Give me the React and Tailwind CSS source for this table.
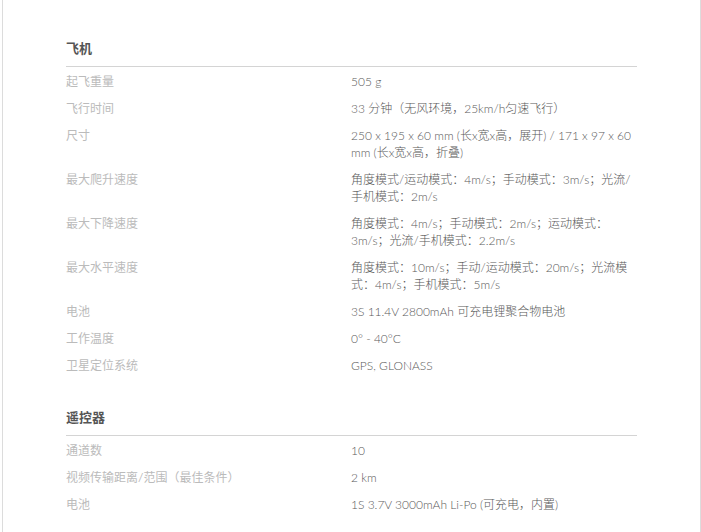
import React from 'react';

// 规格参数表
const sections = [
    {
        title: '飞机',
        rows: [
            ['起飞重量', '505 g'],
            ['飞行时间', '33 分钟（无风环境，25km/h匀速飞行）'],
            ['尺寸', '250 x 195 x 60 mm (长x宽x高，展开) / 171 x 97 x 60 mm (长x宽x高，折叠)'],
            ['最大爬升速度', '角度模式/运动模式：4m/s；手动模式：3m/s；光流/手机模式：2m/s'],
            ['最大下降速度', '角度模式：4m/s；手动模式：2m/s；运动模式：3m/s；光流/手机模式：2.2m/s'],
            ['最大水平速度', '角度模式：10m/s；手动/运动模式：20m/s；光流模式：4m/s；手机模式：5m/s'],
            ['电池', '3S 11.4V 2800mAh 可充电锂聚合物电池'],
            ['工作温度', '0° - 40°C'],
            ['卫星定位系统', 'GPS, GLONASS'],
        ],
    },
    {
        title: '遥控器',
        rows: [
            ['通道数', '10'],
            ['视频传输距离/范围（最佳条件）', '2 km'],
            ['电池', '1S 3.7V 3000mAh Li-Po (可充电，内置)'],
        ],
    },
];

const SpecSection = ({ title, rows }) => (
    <div className="mb-[29px]">
        <h3 className="text-[13px] leading-[20px] font-bold text-[#555] pb-[8px] border-b border-[#d4d4d4]">
            {title}
        </h3>
        {rows.map(([label, value]) => (
            <div key={label + value} className="flex pt-[6px] pb-[4px] text-[12px] leading-[17px]">
                <div className="w-[285px] shrink-0 text-[#bbb]">{label}</div>
                <div className="flex-1 text-[#5a5a5a] font-light">{value}</div>
            </div>
        ))}
    </div>
);

export default function App() {
    return (
        <div
            className="bg-white w-[701px] h-[532px] overflow-hidden"
            style={{ fontFamily: 'Lato, "Noto Sans CJK SC", sans-serif' }}
        >
            <div className="ml-[2px] w-[699px] h-full border-x border-[#dcdcdc] pt-[38px] pl-[63px] pr-[63px]">
                {sections.map((s) => (
                    <SpecSection key={s.title} title={s.title} rows={s.rows} />
                ))}
            </div>
        </div>
    );
}
